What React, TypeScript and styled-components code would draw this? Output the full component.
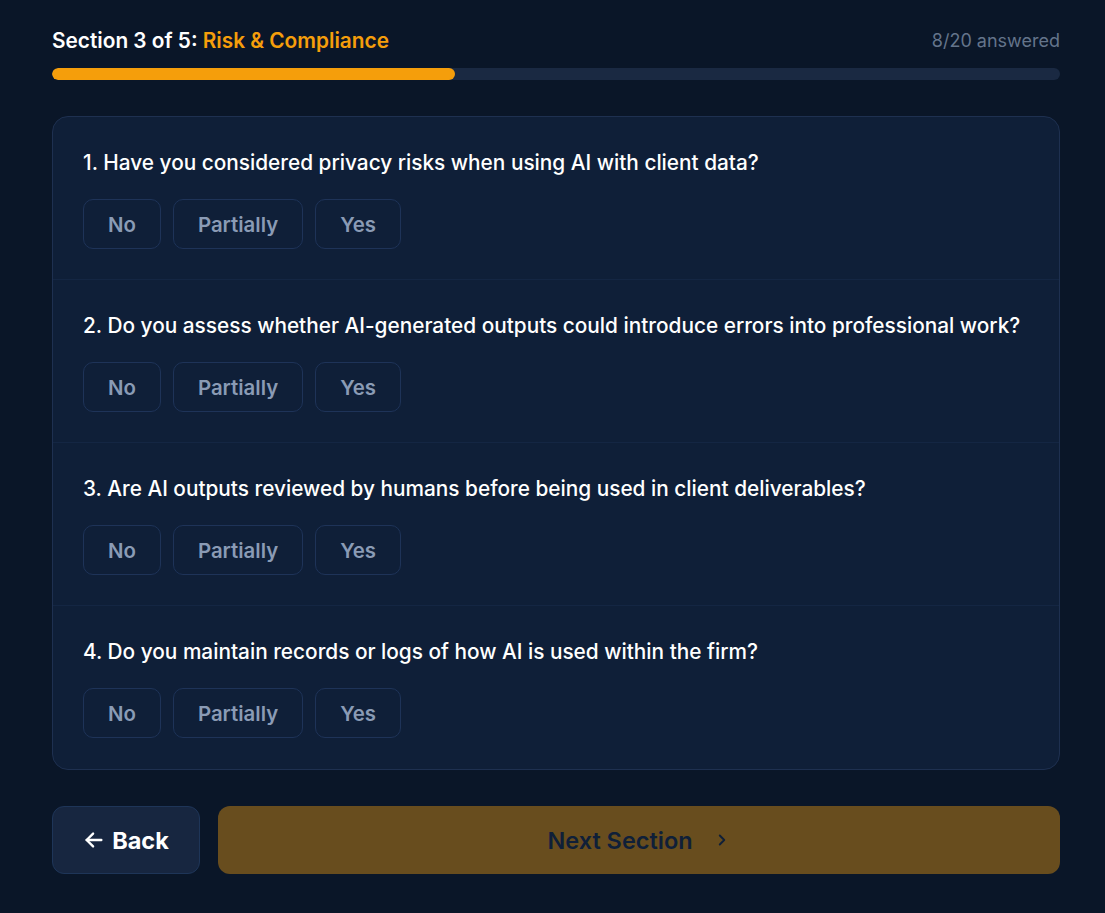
import React from "react";
import styled, { createGlobalStyle } from "styled-components";

const GlobalStyle = createGlobalStyle`
  body {
    margin: 0;
    background: #0a1628;
    font-family: Inter, "Noto Sans", sans-serif;
  }
`;

const questions = [
  "Have you considered privacy risks when using AI with client data?",
  "Do you assess whether AI-generated outputs could introduce errors into professional work?",
  "Are AI outputs reviewed by humans before being used in client deliverables?",
  "Do you maintain records or logs of how AI is used within the firm?",
];

const options = ["No", "Partially", "Yes"];

export default function App() {
  const answered = 8;
  const total = 20;
  return (
    <>
      <GlobalStyle />
      <Page>
        <Header>
          <SectionTitle>
            Section 3 of 5: <Accent>Risk &amp; Compliance</Accent>
          </SectionTitle>
          <Count>
            {answered}/{total} answered
          </Count>
        </Header>
        <Track>
          <Fill style={{ width: `${(answered / total) * 100}%` }} />
        </Track>

        <Card>
          {questions.map((q, i) => (
            <QuestionBlock key={i}>
              <QuestionText>
                {i + 1}. {q}
              </QuestionText>
              <Options>
                {options.map((o) => (
                  <OptionButton key={o}>{o}</OptionButton>
                ))}
              </Options>
            </QuestionBlock>
          ))}
        </Card>

        <Footer>
          <BackButton>
            <svg width="22" height="22" viewBox="0 0 24 24" fill="none" stroke="currentColor" strokeWidth="2.6" strokeLinecap="round" strokeLinejoin="round">
              <path d="M20 12H4" />
              <path d="M11 19l-7-7 7-7" />
            </svg>
            Back
          </BackButton>
          <NextButton>
            Next Section
            <svg width="18" height="18" viewBox="0 0 24 24" fill="none" stroke="currentColor" strokeWidth="2.5" strokeLinecap="round" strokeLinejoin="round">
              <path d="M9 18l6-6-6-6" />
            </svg>
          </NextButton>
        </Footer>
      </Page>
    </>
  );
}

const Page = styled.div`
  width: 1008px;
  margin-left: 52px;
  padding: 27px 0 40px;
  box-sizing: border-box;
`;

const Header = styled.div`
  display: flex;
  justify-content: space-between;
  align-items: center;
  height: 26px;
`;

const SectionTitle = styled.div`
  font-size: 20.8px;
  font-weight: 600;
  color: #ffffff;
`;

const Accent = styled.span`
  color: #f59e0b;
`;

const Count = styled.div`
  font-size: 18px;
  color: #64748b;
`;

const Track = styled.div`
  margin-top: 15px;
  height: 12px;
  border-radius: 6px;
  background: #1a2942;
  overflow: hidden;
`;

const Fill = styled.div`
  height: 100%;
  border-radius: 6px;
  background: #f59e0b;
`;

const Card = styled.div`
  margin-top: 36px;
  background: #0f1f38;
  border: 1px solid #1e3050;
  border-radius: 16px;
  overflow: hidden;
`;

const QuestionBlock = styled.div`
  padding: 31px 30px 30px;
  border-bottom: 1px solid #142643;

  &:last-child {
    border-bottom: none;
    padding-bottom: 31px;
  }
`;

const QuestionText = styled.div`
  font-size: 20.8px;
  line-height: 30px;
  font-weight: 500;
  color: #ffffff;
`;

const Options = styled.div`
  display: flex;
  gap: 12px;
  margin-top: 21px;
`;

const OptionButton = styled.button`
  height: 50px;
  padding: 0 24px;
  background: #0f1f38;
  border: 1px solid #1e3358;
  border-radius: 10px;
  font-family: Inter, sans-serif;
  font-size: 20.4px;
  font-weight: 600;
  color: #8a9bb5;
  cursor: pointer;
`;

const Footer = styled.div`
  display: flex;
  gap: 18px;
  margin-top: 36px;
`;

const BackButton = styled.button`
  width: 148px;
  height: 68px;
  display: flex;
  align-items: center;
  justify-content: center;
  gap: 7px;
  background: #172640;
  border: 1px solid #1e3558;
  border-radius: 12px;
  font-family: Inter, sans-serif;
  font-size: 23.5px;
  font-weight: 700;
  color: #ffffff;
`;

const NextButton = styled.button`
  flex: 1;
  height: 68px;
  display: flex;
  align-items: center;
  justify-content: center;
  gap: 20px;
  background: #684d1e;
  border: none;
  border-radius: 12px;
  font-family: Inter, sans-serif;
  font-size: 23.5px;
  font-weight: 600;
  color: #0f1f38;
`;
